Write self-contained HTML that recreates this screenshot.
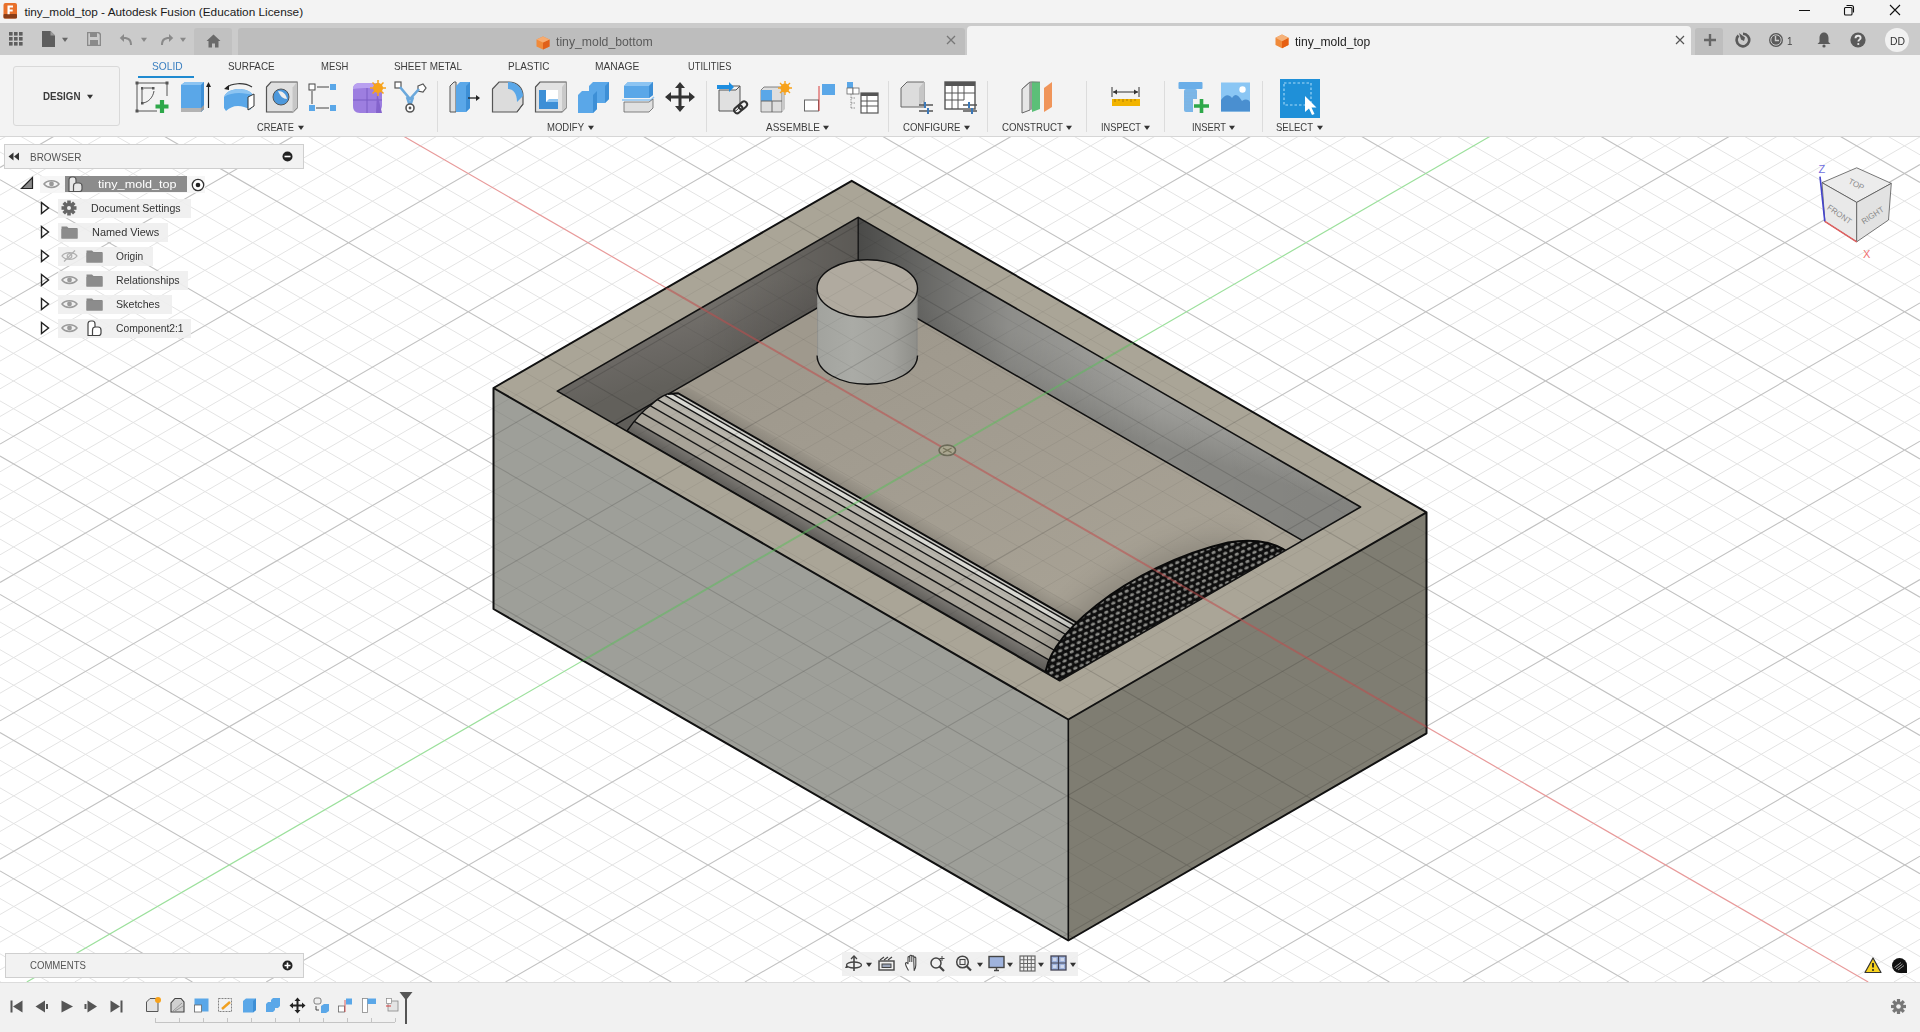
<!DOCTYPE html>
<html><head><meta charset="utf-8"><title>tiny_mold_top - Autodesk Fusion</title>
<style>html,body{margin:0;padding:0;}body{width:1920px;height:1032px;overflow:hidden;position:relative;background:#fff;font-family:"Liberation Sans",sans-serif;}</style>
</head><body>
<svg width="1920" height="1032" style="position:absolute;left:0;top:0">
<rect x="0" y="136" width="1920" height="846" fill="#ffffff"/>
<path d="M1887.4 136.0L1920.0 154.8M6.6 136.0L0.0 139.8M1791.7 136.0L1920.0 210.1M102.3 136.0L-0.0 195.1M1743.8 136.0L1920.0 237.7M150.2 136.0L0.0 222.8M1695.9 136.0L1920.0 265.4M198.1 136.0L0.0 250.5M1648.1 136.0L1920.0 293.0M245.9 136.0L0.0 278.1M1552.3 136.0L1920.0 348.3M341.7 136.0L0.0 333.5M1504.4 136.0L1920.0 376.0M389.6 136.0L0.0 361.1M1456.5 136.0L1920.0 403.6M437.4 136.0L0.0 388.8M1408.7 136.0L1920.0 431.3M485.3 136.0L0.0 416.5M1312.9 136.0L1920.0 486.6M581.1 136.0L0.0 471.8M1265.0 136.0L1920.0 514.2M628.9 136.0L0.0 499.5M1217.1 136.0L1920.0 541.9M676.8 136.0L0.0 527.1M1169.3 136.0L1920.0 569.5M724.7 136.0L0.0 554.8M1073.5 136.0L1920.0 624.8M820.4 136.0L0.0 610.1M1025.6 136.0L1920.0 652.5M868.3 136.0L0.0 637.8M977.7 136.0L1920.0 680.1M916.2 136.0L0.0 665.5M929.9 136.0L1920.0 707.8M964.0 136.0L0.0 693.2M834.1 136.0L1920.0 763.1M1059.8 136.0L0.0 748.5M786.2 136.0L1920.0 790.7M1107.7 136.0L0.0 776.2M738.3 136.0L1920.0 818.4M1155.5 136.0L0.0 803.8M690.5 136.0L1920.0 846.0M1203.4 136.0L0.0 831.5M594.7 136.0L1920.0 901.3M1299.1 136.0L0.0 886.8M546.8 136.0L1920.0 929.0M1347.0 136.0L0.0 914.5M498.9 136.0L1920.0 956.6M1394.9 136.0L0.0 942.2M451.1 136.0L1916.1 982.0M1442.8 136.0L0.0 969.8M355.3 136.0L1820.3 982.0M1538.5 136.0L74.7 982.0M307.4 136.0L1772.4 982.0M1586.4 136.0L122.5 982.0M259.5 136.0L1724.6 982.0M1634.3 136.0L170.4 982.0M211.7 136.0L1676.7 982.0M1682.1 136.0L218.3 982.0M115.9 136.0L1580.9 982.0M1777.9 136.0L314.0 982.0M68.0 136.0L1533.0 982.0M1825.7 136.0L361.9 982.0M20.1 136.0L1485.2 982.0M1873.6 136.0L409.8 982.0M0.0 152.0L1437.3 982.0M1920.0 136.9L457.7 982.0M0.0 207.3L1341.5 982.0M1920.0 192.2L553.4 982.0M0.0 235.0L1293.7 982.0M1920.0 219.9L601.3 982.0M0.0 262.6L1245.8 982.0M1920.0 247.5L649.1 982.0M0.0 290.3L1197.9 982.0M1920.0 275.2L697.0 982.0M0.0 345.6L1102.1 982.0M1920.0 330.5L792.8 982.0M0.0 373.2L1054.3 982.0M1920.0 358.2L840.6 982.0M0.0 400.9L1006.4 982.0M1920.0 385.9L888.5 982.0M0.0 428.5L958.5 982.0M1920.0 413.5L936.4 982.0M0.0 483.8L862.7 982.0M1920.0 468.9L1032.1 982.0M0.0 511.4L814.9 982.0M1920.0 496.5L1080.0 982.0M0.0 539.1L767.0 982.0M1920.0 524.2L1127.9 982.0M0.0 566.7L719.1 982.0M1920.0 551.9L1175.7 982.0M0.0 622.0L623.3 982.0M1920.0 607.2L1271.5 982.0M0.0 649.7L575.5 982.0M1920.0 634.9L1319.4 982.0M0.0 677.3L527.6 982.0M1920.0 662.5L1367.2 982.0M0.0 705.0L479.7 982.0M1920.0 690.2L1415.1 982.0M0.0 760.3L383.9 982.0M1920.0 745.5L1510.9 982.0M0.0 787.9L336.1 982.0M1920.0 773.2L1558.7 982.0M0.0 815.6L288.2 982.0M1920.0 800.9L1606.6 982.0M0.0 843.2L240.3 982.0M1920.0 828.5L1654.5 982.0M0.0 898.5L144.5 982.0M1920.0 883.9L1750.2 982.0M0.0 926.2L96.7 982.0M1920.0 911.5L1798.1 982.0M0.0 953.8L48.8 982.0M1920.0 939.2L1846.0 982.0M0.0 981.5L0.9 982.0M1920.0 966.9L1893.8 982.0" stroke="#e4e4e4" stroke-width="1" fill="none"/>
<path d="M1839.6 136.0L1920.0 182.4M54.5 136.0L0.0 167.5M1600.2 136.0L1920.0 320.7M293.8 136.0L0.0 305.8M1360.8 136.0L1920.0 458.9M533.2 136.0L0.0 444.1M1121.4 136.0L1920.0 597.2M772.5 136.0L0.0 582.5M882.0 136.0L1920.0 735.4M1011.9 136.0L0.0 720.8M642.6 136.0L1920.0 873.7M1251.3 136.0L0.0 859.2M163.8 136.0L1628.8 982.0M1730.0 136.0L266.2 982.0M0.0 179.7L1389.4 982.0M1920.0 164.5L505.5 982.0M0.0 317.9L1150.0 982.0M1920.0 302.9L744.9 982.0M0.0 456.1L910.6 982.0M1920.0 441.2L984.3 982.0M0.0 594.4L671.2 982.0M1920.0 579.5L1223.6 982.0M0.0 732.6L431.8 982.0M1920.0 717.9L1463.0 982.0M0.0 870.9L192.4 982.0M1920.0 856.2L1702.3 982.0" stroke="#c2c2c2" stroke-width="1.1" fill="none"/>
<line x1="403.2" y1="136.0" x2="1868.2" y2="982.0" stroke="#e89a9a" stroke-width="1.2"/>
<line x1="1490.6" y1="136.0" x2="26.8" y2="982.0" stroke="#9ce09c" stroke-width="1.2"/>
<defs>
<clipPath id="cav"><polygon points="858.2,217.4 557.3,391.1 1059.7,680.7 1360.6,507.0"/></clipPath>
<linearGradient id="gFloor" gradientUnits="userSpaceOnUse" x1="900" y1="330" x2="1000" y2="620"><stop offset="0" stop-color="#9f998d"/><stop offset="0.4" stop-color="#a29c90"/><stop offset="1" stop-color="#a7a194"/></linearGradient>
<linearGradient id="gWallL" gradientUnits="userSpaceOnUse" x1="700" y1="300" x2="720" y2="370"><stop offset="0" stop-color="#75726d"/><stop offset="0.5" stop-color="#6b6864"/><stop offset="1" stop-color="#62605b"/></linearGradient><linearGradient id="gWallLs" gradientUnits="userSpaceOnUse" x1="858" y1="0" x2="700" y2="0"><stop offset="0" stop-color="#000" stop-opacity="0.22"/><stop offset="1" stop-color="#000" stop-opacity="0"/></linearGradient>
<linearGradient id="gWallR" gradientUnits="userSpaceOnUse" x1="1110" y1="360" x2="1090" y2="425"><stop offset="0" stop-color="#a4a4a0"/><stop offset="0.5" stop-color="#9a9a96"/><stop offset="1" stop-color="#878783"/></linearGradient><linearGradient id="gWallRs" gradientUnits="userSpaceOnUse" x1="858" y1="0" x2="1360" y2="0"><stop offset="0" stop-color="#000" stop-opacity="0.55"/><stop offset="0.3" stop-color="#000" stop-opacity="0.14"/><stop offset="0.6" stop-color="#000" stop-opacity="0"/><stop offset="1" stop-color="#000" stop-opacity="0.03"/></linearGradient>
<linearGradient id="gGrvD" gradientUnits="userSpaceOnUse" x1="850" y1="545.5" x2="844.05" y2="555.8"><stop offset="0" stop-color="#7a7772"/><stop offset="1" stop-color="#605e5a"/></linearGradient><linearGradient id="gGrvS" gradientUnits="userSpaceOnUse" x1="857.98" y1="478.3" x2="850" y2="492.2"><stop offset="0" stop-color="#000" stop-opacity="0"/><stop offset="1" stop-color="#000" stop-opacity="0.13"/></linearGradient><linearGradient id="gPin" gradientUnits="userSpaceOnUse" x1="817" y1="0" x2="917" y2="0"><stop offset="0" stop-color="#a2a39e"/><stop offset="0.35" stop-color="#aaaba6"/><stop offset="0.75" stop-color="#a2a29d"/><stop offset="1" stop-color="#8e8e89"/></linearGradient>
<pattern id="mesh" patternUnits="userSpaceOnUse" width="6.8" height="11" patternTransform="rotate(-24)"><rect width="6.8" height="11" fill="#0e0e0e"/><ellipse cx="3.4" cy="2.75" rx="2.3" ry="1.5" fill="#8c8c88"/><ellipse cx="0" cy="8.25" rx="2.3" ry="1.5" fill="#8c8c88"/><ellipse cx="6.8" cy="8.25" rx="2.3" ry="1.5" fill="#8c8c88"/></pattern>
<filter id="blur12" x="-50%" y="-50%" width="200%" height="200%"><feGaussianBlur stdDeviation="14"/></filter>
</defs>
<polygon points="493.5,388.0 1068.3,719.5 1068.3,940.5 493.5,609.0" fill="#9e9f99"/>
<polygon points="1068.3,719.5 1426.5,512.3 1426.5,733.3 1068.3,940.5" fill="#7f7d72"/>
<path d="M851.7 180.8L493.5 388.0L1068.3 719.5L1426.5 512.3ZM858.2 217.4L557.3 391.1L1059.7 680.7L1360.6 507.0Z" fill="#aaa597" fill-rule="evenodd"/>
<g clip-path="url(#cav)">
<polygon points="858.2,217.4 557.3,391.1 1059.7,680.7 1360.6,507.0" fill="url(#gFloor)"/>
<polygon points="858.2,217.4 557.3,391.1 557.3,458.1 858.2,284.4" fill="url(#gWallL)"/>
<polygon points="858.2,217.4 557.3,391.1 557.3,458.1 858.2,284.4" fill="url(#gWallLs)"/>
<polygon points="858.2,217.4 1360.6,507.0 1360.6,574.0 858.2,284.4" fill="url(#gWallR)"/>
<polygon points="858.2,217.4 1360.6,507.0 1360.6,574.0 858.2,284.4" fill="url(#gWallRs)"/>
<polygon points="600,433 668,393.9 627,431 620,441" fill="#5f5d59"/>
<line x1="858.2" y1="217.4" x2="858.2" y2="284.4" stroke="#111" stroke-width="1.3"/>
<polyline points="557.3,458.1 858.2,284.4 1360.6,574.0" fill="none" stroke="#111" stroke-width="1.5"/>
<polygon points="667.5,394.5 687.9,386.9 1100.0,620.1 1100.0,637.1" fill="url(#gGrvS)"/>
<clipPath id="grv"><path d="M667.5,394 L678,393.2 L1080,624.6 L1080,760 L560,760 L600,470 L627,431 C634,421 641,412 651,405 C656,400 662,396 667.5,394Z"/></clipPath>
<g clip-path="url(#grv)">
<polygon points="560.0,325.3 1090.0,630.3 1090.0,634.1 560.0,329.1" fill="#c9c8c2"/>
<polygon points="560.0,329.1 1090.0,634.1 1090.0,640.0 560.0,335.0" fill="#d9d9d3"/>
<polygon points="560.0,335.0 1090.0,640.0 1090.0,648.5 560.0,343.5" fill="#b8b5ac"/>
<polygon points="560.0,343.5 1090.0,648.5 1090.0,658.8 560.0,353.8" fill="#b1ada3"/>
<polygon points="560.0,353.8 1090.0,658.8 1090.0,670.8 560.0,365.8" fill="#aca79c"/>
<polygon points="560.0,365.8 1090.0,670.8 1090.0,683.6 560.0,378.6" fill="#a8a398"/>
<polygon points="560.0,378.6 1090.0,683.6 1090.0,697.3 560.0,392.3" fill="url(#gGrvD)"/>
<polygon points="560.0,392.3 1090.0,697.3 1090.0,720.3 560.0,415.3" fill="#6a6661"/>
<line x1="560.0" y1="329.1" x2="1090.0" y2="634.1" stroke="#151515" stroke-width="1.4"/>
<line x1="560.0" y1="335.0" x2="1090.0" y2="640.0" stroke="#151515" stroke-width="1.4"/>
<line x1="560.0" y1="343.5" x2="1090.0" y2="648.5" stroke="#151515" stroke-width="1.4"/>
<line x1="560.0" y1="353.8" x2="1090.0" y2="658.8" stroke="#151515" stroke-width="1.4"/>
<line x1="560.0" y1="365.8" x2="1090.0" y2="670.8" stroke="#151515" stroke-width="1.4"/>
<line x1="560.0" y1="378.6" x2="1090.0" y2="683.6" stroke="#151515" stroke-width="1.4"/>
<line x1="560.0" y1="392.3" x2="1090.0" y2="697.3" stroke="#151515" stroke-width="1.4"/>
</g>
<path d="M667.5,394 L678,393.2 L1080,624.6" stroke="#0d0d0d" stroke-width="2" fill="none"/>
<path d="M627,431 C634,421 641,412 651,405 C656,400 662,396 667.5,394" stroke="#111" stroke-width="1.5" fill="none"/>
<ellipse cx="1150" cy="610" rx="120" ry="45" transform="rotate(-30 1150 610)" fill="#000" opacity="0.16" filter="url(#blur12)"/>
<path d="M1046,684 C1036,640 1130,565 1228,542.5 C1260,537 1281,545 1292,556 L1120,700Z" fill="url(#mesh)"/>
<path d="M1046,684 C1036,640 1130,565 1228,542.5 C1260,537 1281,545 1292,556" stroke="#0a0a0a" stroke-width="2" fill="none"/>
<path d="M817.1 288.5 L817.1 355.4 A50.2 28.8 0 0 0 917.5 355.4 L917.5 288.5 Z" fill="url(#gPin)"/>
<path d="M817.1 355.4 A50.2 28.8 0 0 0 917.5 355.4" fill="none" stroke="#111" stroke-width="1.4"/>
<path d="M817.6 288.5V355.4M917.0 288.5V355.4" stroke="#777" stroke-width="0.8" stroke-opacity="0.5"/>
<ellipse cx="867.3" cy="288.5" rx="50.2" ry="28.8" fill="#b0aa9f" stroke="#111" stroke-width="1.4"/>
</g>
<polygon points="858.2,217.4 557.3,391.1 1059.7,680.7 1360.6,507.0" fill="none" stroke="#111" stroke-width="1.6" stroke-linejoin="round"/>
<path d="M851.7 180.8L1426.5 512.3L1426.5 733.3L1068.3 940.5L493.5 609.0L493.5 388.0ZM493.5 388.0L1068.3 719.5L1426.5 512.3" fill="none" stroke="#111" stroke-width="2" stroke-linejoin="round"/>
<line x1="1068.3" y1="719.5" x2="1068.3" y2="940.5" stroke="#111" stroke-width="1.6"/>
<clipPath id="mclip"><polygon points="851.7,180.8 1426.5,512.3 1426.5,733.3 1068.3,940.5 493.5,609.0 493.5,388.0"/></clipPath>
<g clip-path="url(#mclip)">
<path d="M1887.4 136.0L1920.0 154.8M6.6 136.0L0.0 139.8M1791.7 136.0L1920.0 210.1M102.3 136.0L-0.0 195.1M1743.8 136.0L1920.0 237.7M150.2 136.0L0.0 222.8M1695.9 136.0L1920.0 265.4M198.1 136.0L0.0 250.5M1648.1 136.0L1920.0 293.0M245.9 136.0L0.0 278.1M1552.3 136.0L1920.0 348.3M341.7 136.0L0.0 333.5M1504.4 136.0L1920.0 376.0M389.6 136.0L0.0 361.1M1456.5 136.0L1920.0 403.6M437.4 136.0L0.0 388.8M1408.7 136.0L1920.0 431.3M485.3 136.0L0.0 416.5M1312.9 136.0L1920.0 486.6M581.1 136.0L0.0 471.8M1265.0 136.0L1920.0 514.2M628.9 136.0L0.0 499.5M1217.1 136.0L1920.0 541.9M676.8 136.0L0.0 527.1M1169.3 136.0L1920.0 569.5M724.7 136.0L0.0 554.8M1073.5 136.0L1920.0 624.8M820.4 136.0L0.0 610.1M1025.6 136.0L1920.0 652.5M868.3 136.0L0.0 637.8M977.7 136.0L1920.0 680.1M916.2 136.0L0.0 665.5M929.9 136.0L1920.0 707.8M964.0 136.0L0.0 693.2M834.1 136.0L1920.0 763.1M1059.8 136.0L0.0 748.5M786.2 136.0L1920.0 790.7M1107.7 136.0L0.0 776.2M738.3 136.0L1920.0 818.4M1155.5 136.0L0.0 803.8M690.5 136.0L1920.0 846.0M1203.4 136.0L0.0 831.5M594.7 136.0L1920.0 901.3M1299.1 136.0L0.0 886.8M546.8 136.0L1920.0 929.0M1347.0 136.0L0.0 914.5M498.9 136.0L1920.0 956.6M1394.9 136.0L0.0 942.2M451.1 136.0L1916.1 982.0M1442.8 136.0L0.0 969.8M355.3 136.0L1820.3 982.0M1538.5 136.0L74.7 982.0M307.4 136.0L1772.4 982.0M1586.4 136.0L122.5 982.0M259.5 136.0L1724.6 982.0M1634.3 136.0L170.4 982.0M211.7 136.0L1676.7 982.0M1682.1 136.0L218.3 982.0M115.9 136.0L1580.9 982.0M1777.9 136.0L314.0 982.0M68.0 136.0L1533.0 982.0M1825.7 136.0L361.9 982.0M20.1 136.0L1485.2 982.0M1873.6 136.0L409.8 982.0M0.0 152.0L1437.3 982.0M1920.0 136.9L457.7 982.0M0.0 207.3L1341.5 982.0M1920.0 192.2L553.4 982.0M0.0 235.0L1293.7 982.0M1920.0 219.9L601.3 982.0M0.0 262.6L1245.8 982.0M1920.0 247.5L649.1 982.0M0.0 290.3L1197.9 982.0M1920.0 275.2L697.0 982.0M0.0 345.6L1102.1 982.0M1920.0 330.5L792.8 982.0M0.0 373.2L1054.3 982.0M1920.0 358.2L840.6 982.0M0.0 400.9L1006.4 982.0M1920.0 385.9L888.5 982.0M0.0 428.5L958.5 982.0M1920.0 413.5L936.4 982.0M0.0 483.8L862.7 982.0M1920.0 468.9L1032.1 982.0M0.0 511.4L814.9 982.0M1920.0 496.5L1080.0 982.0M0.0 539.1L767.0 982.0M1920.0 524.2L1127.9 982.0M0.0 566.7L719.1 982.0M1920.0 551.9L1175.7 982.0M0.0 622.0L623.3 982.0M1920.0 607.2L1271.5 982.0M0.0 649.7L575.5 982.0M1920.0 634.9L1319.4 982.0M0.0 677.3L527.6 982.0M1920.0 662.5L1367.2 982.0M0.0 705.0L479.7 982.0M1920.0 690.2L1415.1 982.0M0.0 760.3L383.9 982.0M1920.0 745.5L1510.9 982.0M0.0 787.9L336.1 982.0M1920.0 773.2L1558.7 982.0M0.0 815.6L288.2 982.0M1920.0 800.9L1606.6 982.0M0.0 843.2L240.3 982.0M1920.0 828.5L1654.5 982.0M0.0 898.5L144.5 982.0M1920.0 883.9L1750.2 982.0M0.0 926.2L96.7 982.0M1920.0 911.5L1798.1 982.0M0.0 953.8L48.8 982.0M1920.0 939.2L1846.0 982.0M0.0 981.5L0.9 982.0M1920.0 966.9L1893.8 982.0" stroke="#000" stroke-opacity="0.055" stroke-width="1" fill="none"/>
<path d="M1839.6 136.0L1920.0 182.4M54.5 136.0L0.0 167.5M1600.2 136.0L1920.0 320.7M293.8 136.0L0.0 305.8M1360.8 136.0L1920.0 458.9M533.2 136.0L0.0 444.1M1121.4 136.0L1920.0 597.2M772.5 136.0L0.0 582.5M882.0 136.0L1920.0 735.4M1011.9 136.0L0.0 720.8M642.6 136.0L1920.0 873.7M1251.3 136.0L0.0 859.2M163.8 136.0L1628.8 982.0M1730.0 136.0L266.2 982.0M0.0 179.7L1389.4 982.0M1920.0 164.5L505.5 982.0M0.0 317.9L1150.0 982.0M1920.0 302.9L744.9 982.0M0.0 456.1L910.6 982.0M1920.0 441.2L984.3 982.0M0.0 594.4L671.2 982.0M1920.0 579.5L1223.6 982.0M0.0 732.6L431.8 982.0M1920.0 717.9L1463.0 982.0M0.0 870.9L192.4 982.0M1920.0 856.2L1702.3 982.0" stroke="#000" stroke-opacity="0.14" stroke-width="1.1" fill="none"/>
<line x1="403.2" y1="136.0" x2="1868.2" y2="982.0" stroke="#c04c4c" stroke-opacity="0.55" stroke-width="2"/>
<line x1="1490.6" y1="136.0" x2="26.8" y2="982.0" stroke="#58c058" stroke-opacity="0.5" stroke-width="2"/>
</g>
<ellipse cx="947.3" cy="450.3" rx="8.3" ry="5.2" fill="#aaa690" stroke="#6b6a58" stroke-width="1.6"/>
<path d="M943 448l8.6 4.6M943 452.6l8.6-4.6" stroke="#77745c" stroke-width="1.3"/>
</svg>
<div style="position:absolute;left:0.0px;top:0.0px;width:1920.0px;height:23.0px;background:#f3f3f3"></div>
<svg style="position:absolute;left:3.0px;top:3.0px;" width="15" height="16" viewBox="0 0 15 16"><rect x="0.5" y="0" width="13.5" height="15.5" rx="2" fill="#e8702a"/><rect x="0.5" y="11" width="13.5" height="4.5" rx="1" fill="#8a3d17"/><path d="M4.5 2.5h5.5v2h-3.3v2h3v2h-3v2.8h-2.2z" fill="#fff"/></svg>
<span style="position:absolute;left:24.4px;top:4.9px;font-size:11.80px;line-height:normal;color:#1a1a1a;white-space:nowrap;">tiny_mold_top - Autodesk Fusion (Education License)</span>
<div style="position:absolute;left:1799.0px;top:10.0px;width:10.5px;height:1.2px;background:#111"></div>
<svg style="position:absolute;left:1843.0px;top:4.0px;" width="12" height="12" viewBox="0 0 12 12"><rect x="1.5" y="3.5" width="7.5" height="7.5" rx="1" fill="none" stroke="#111" stroke-width="1.1"/><path d="M3.5 1.5h5a2 2 0 0 1 2 2v5" fill="none" stroke="#111" stroke-width="1.1"/></svg>
<svg style="position:absolute;left:1889.0px;top:4.0px;" width="12" height="12" viewBox="0 0 12 12"><path d="M1 1L11 11M11 1L1 11" stroke="#111" stroke-width="1.1"/></svg>
<div style="position:absolute;left:0.0px;top:23.0px;width:1920.0px;height:32.0px;background:#cbcbcb"></div>
<svg style="position:absolute;left:9.0px;top:32.0px;" width="14" height="14" viewBox="0 0 14 14"><rect x="0" y="0" width="3.6" height="3.6" fill="#5e5e5e"/><rect x="0" y="5" width="3.6" height="3.6" fill="#5e5e5e"/><rect x="0" y="10" width="3.6" height="3.6" fill="#5e5e5e"/><rect x="5" y="0" width="3.6" height="3.6" fill="#5e5e5e"/><rect x="5" y="5" width="3.6" height="3.6" fill="#5e5e5e"/><rect x="5" y="10" width="3.6" height="3.6" fill="#5e5e5e"/><rect x="10" y="0" width="3.6" height="3.6" fill="#5e5e5e"/><rect x="10" y="5" width="3.6" height="3.6" fill="#5e5e5e"/><rect x="10" y="10" width="3.6" height="3.6" fill="#5e5e5e"/></svg>
<svg style="position:absolute;left:41.0px;top:31.0px;" width="16" height="17" viewBox="0 0 16 17"><path d="M1 0h8.5l4.5 4.5V16H1z" fill="#5e5e5e"/><path d="M9.5 0v4.5H14" fill="#9a9a9a"/></svg>
<svg style="position:absolute;left:61.5px;top:35.5px;" width="6" height="6" viewBox="0 0 6 6"><path d="M0 1.8L6 1.8L3 6 Z" fill="#666"/></svg>
<svg style="position:absolute;left:87.0px;top:32.0px;" width="14" height="14" viewBox="0 0 14 14"><path d="M0.5 0.5h11l2 2v11h-13z" fill="none" stroke="#8a8a8a" stroke-width="1.6"/><rect x="3" y="1" width="7" height="4" fill="#8a8a8a"/><rect x="3" y="8" width="8" height="5" fill="#8a8a8a"/></svg>
<svg style="position:absolute;left:119.0px;top:32.0px;" width="16" height="14" viewBox="0 0 16 14"><path d="M13 13 C13 7 10 5 5 5 L5 2 L0.8 6 L5 10 L5 7 C9 7 11 9 11 13Z" fill="#8a8a8a"/></svg>
<svg style="position:absolute;left:140.5px;top:35.5px;" width="6" height="6" viewBox="0 0 6 6"><path d="M0 1.8L6 1.8L3 6 Z" fill="#888"/></svg>
<svg style="position:absolute;left:158.0px;top:32.0px;" width="16" height="14" viewBox="0 0 16 14"><path d="M3 13 C3 7 6 5 11 5 L11 2 L15.2 6 L11 10 L11 7 C7 7 5 9 5 13Z" fill="#8a8a8a"/></svg>
<svg style="position:absolute;left:179.5px;top:35.5px;" width="6" height="6" viewBox="0 0 6 6"><path d="M0 1.8L6 1.8L3 6 Z" fill="#888"/></svg>
<div style="position:absolute;left:193.5px;top:27.5px;width:38.5px;height:27.0px;background:#c1c1c1;border-radius:3px 3px 0 0"></div>
<svg style="position:absolute;left:206.0px;top:34.0px;" width="15" height="14" viewBox="0 0 15 14"><path d="M7.5 0.5L0.5 7H2.5V13.5H6V9.5H9V13.5H12.5V7H14.5Z" fill="#6a6a6a"/></svg>
<div style="position:absolute;left:238.0px;top:27.5px;width:727.0px;height:27.5px;background:#bdbdbd;border-radius:3px 3px 0 0"></div>
<svg style="position:absolute;left:535.5px;top:35.5px;" width="15" height="14" viewBox="0 0 15 14"><path d="M7 0.5L13.5 3.5V10.5L7 13.5L0.5 10.5V3.5Z" fill="#f08a3a"/><path d="M7 6.5L13.5 3.5V10.5L7 13.5Z" fill="#e0601a"/><path d="M0.5 3.5L7 0.5L13.5 3.5L7 6.5Z" fill="#f7ab70"/></svg>
<span style="position:absolute;left:555.8px;top:34.7px;font-size:11.90px;line-height:normal;color:#5a5a5a;white-space:nowrap;transform:scaleX(1.030);transform-origin:0 0;">tiny_mold_bottom</span>
<svg style="position:absolute;left:946.0px;top:35.0px;" width="10" height="10" viewBox="0 0 10 10"><path d="M1 1L9 9M9 1L1 9" stroke="#777" stroke-width="1.3"/></svg>
<div style="position:absolute;left:967.0px;top:26.0px;width:724.0px;height:29.0px;background:#f3f3f3;border-radius:4px 4px 0 0"></div>
<svg style="position:absolute;left:1274.5px;top:34.0px;" width="15" height="15" viewBox="0 0 15 15"><path d="M7 0.5L13.5 3.8V11L7 14.3L0.5 11V3.8Z" fill="#f08a3a"/><path d="M7 7.3L13.5 3.8V11L7 14.3Z" fill="#e65f12"/><path d="M0.5 3.8L7 0.5L13.5 3.8L7 7.3Z" fill="#f5b27a"/></svg>
<span style="position:absolute;left:1294.7px;top:34.7px;font-size:11.90px;line-height:normal;color:#1e1e1e;white-space:nowrap;transform:scaleX(1.016);transform-origin:0 0;">tiny_mold_top</span>
<svg style="position:absolute;left:1675.0px;top:35.0px;" width="10" height="10" viewBox="0 0 10 10"><path d="M1 1L9 9M9 1L1 9" stroke="#555" stroke-width="1.2"/></svg>
<div style="position:absolute;left:1695.0px;top:27.5px;width:28.0px;height:27.5px;background:#bebebe;border-radius:3px 3px 0 0"></div>
<svg style="position:absolute;left:1702.5px;top:33.0px;" width="14" height="14" viewBox="0 0 14 14"><path d="M7 1V13M1 7H13" stroke="#666" stroke-width="2.4"/></svg>
<svg style="position:absolute;left:1735.0px;top:32.0px;" width="16" height="16" viewBox="0 0 16 16"><path d="M3.5 3.5A6.3 6.3 0 1 0 8 1.7" fill="none" stroke="#5a5a5a" stroke-width="2.6"/><path d="M4 1L10 5.5L9 9L6 7.5Z" fill="#5a5a5a"/></svg>
<svg style="position:absolute;left:1768.0px;top:32.0px;" width="16" height="16" viewBox="0 0 16 16"><circle cx="8" cy="8" r="7" fill="#5a5a5a"/><circle cx="8" cy="8" r="5.2" fill="none" stroke="#cbcbcb" stroke-width="1"/><path d="M7.5 4v4.5h3.5" fill="none" stroke="#cbcbcb" stroke-width="1.4"/></svg>
<span style="position:absolute;left:1786.5px;top:35.0px;font-size:11.00px;line-height:normal;color:#444;white-space:nowrap;transform:scaleX(0.899);transform-origin:0 0;">1</span>
<svg style="position:absolute;left:1816.0px;top:31.0px;" width="16" height="17" viewBox="0 0 16 17"><path d="M8 1.5c-3 0-4.5 2.5-4.5 5.5v4L1.5 13h13l-2-2V7c0-3-1.5-5.5-4.5-5.5z" fill="#5a5a5a"/><circle cx="8" cy="15" r="1.6" fill="#5a5a5a"/></svg>
<svg style="position:absolute;left:1850.0px;top:32.0px;" width="16" height="16" viewBox="0 0 16 16"><circle cx="8" cy="8" r="7.6" fill="#5a5a5a"/><path d="M5.5 6.2c0-1.6 1.1-2.5 2.6-2.5s2.5 0.9 2.5 2.2c0 1.6-2.2 1.9-2.2 3.5" fill="none" stroke="#e6e6e6" stroke-width="1.9"/><circle cx="8.3" cy="12" r="1.1" fill="#e6e6e6"/></svg>
<div style="position:absolute;left:1885.0px;top:28.0px;width:24.0px;height:24.0px;background:#f1f1f1;border-radius:50%"></div>
<span style="position:absolute;left:1889.5px;top:35.0px;font-size:11.00px;line-height:normal;color:#333;white-space:nowrap;transform:scaleX(0.944);transform-origin:0 0;">DD</span>
<div style="position:absolute;left:0.0px;top:55.0px;width:1920.0px;height:81.0px;background:#f3f3f3"></div>
<div style="position:absolute;left:0.0px;top:135.5px;width:1920.0px;height:1.0px;background:#d6d6d6"></div>
<div style="position:absolute;left:12.5px;top:65.8px;width:107.5px;height:60.0px;border:1px solid #d9d9d9;border-radius:3px;box-sizing:border-box;background:#f2f2f2"></div>
<span style="position:absolute;left:43.3px;top:90.5px;font-size:10.00px;line-height:normal;color:#3a3a3a;white-space:nowrap;font-weight:bold;transform:scaleX(0.978);transform-origin:0 0;">DESIGN</span>
<svg style="position:absolute;left:87.0px;top:93.0px;" width="6" height="6" viewBox="0 0 6 6"><path d="M0 1.8L6 1.8L3 6 Z" fill="#333"/></svg>
<span style="position:absolute;left:151.6px;top:59.8px;font-size:11.00px;line-height:normal;color:#3a7fc0;white-space:nowrap;transform:scaleX(0.927);transform-origin:0 0;">SOLID</span>
<span style="position:absolute;left:228.0px;top:59.8px;font-size:11.00px;line-height:normal;color:#3c3c3c;white-space:nowrap;transform:scaleX(0.899);transform-origin:0 0;">SURFACE</span>
<span style="position:absolute;left:321.3px;top:59.8px;font-size:11.00px;line-height:normal;color:#3c3c3c;white-space:nowrap;transform:scaleX(0.862);transform-origin:0 0;">MESH</span>
<span style="position:absolute;left:394.0px;top:59.8px;font-size:11.00px;line-height:normal;color:#3c3c3c;white-space:nowrap;transform:scaleX(0.902);transform-origin:0 0;">SHEET METAL</span>
<span style="position:absolute;left:507.5px;top:59.8px;font-size:11.00px;line-height:normal;color:#3c3c3c;white-space:nowrap;transform:scaleX(0.905);transform-origin:0 0;">PLASTIC</span>
<span style="position:absolute;left:595.3px;top:59.8px;font-size:11.00px;line-height:normal;color:#3c3c3c;white-space:nowrap;transform:scaleX(0.931);transform-origin:0 0;">MANAGE</span>
<span style="position:absolute;left:688.3px;top:59.8px;font-size:11.00px;line-height:normal;color:#3c3c3c;white-space:nowrap;transform:scaleX(0.845);transform-origin:0 0;">UTILITIES</span>
<div style="position:absolute;left:138.3px;top:75.8px;width:56.0px;height:2.6px;background:#1f8ad0"></div>
<span style="position:absolute;left:256.7px;top:121.0px;font-size:10.80px;line-height:normal;color:#3c3c3c;white-space:nowrap;transform:scaleX(0.860);transform-origin:0 0;">CREATE</span>
<svg style="position:absolute;left:297.8px;top:123.5px;" width="6" height="6" viewBox="0 0 6 6"><path d="M0 1.8L6 1.8L3 6 Z" fill="#333"/></svg>
<span style="position:absolute;left:546.7px;top:121.0px;font-size:10.80px;line-height:normal;color:#3c3c3c;white-space:nowrap;transform:scaleX(0.881);transform-origin:0 0;">MODIFY</span>
<svg style="position:absolute;left:587.8px;top:123.5px;" width="6" height="6" viewBox="0 0 6 6"><path d="M0 1.8L6 1.8L3 6 Z" fill="#333"/></svg>
<span style="position:absolute;left:765.8px;top:121.0px;font-size:10.80px;line-height:normal;color:#3c3c3c;white-space:nowrap;transform:scaleX(0.926);transform-origin:0 0;">ASSEMBLE</span>
<svg style="position:absolute;left:822.8px;top:123.5px;" width="6" height="6" viewBox="0 0 6 6"><path d="M0 1.8L6 1.8L3 6 Z" fill="#333"/></svg>
<span style="position:absolute;left:903.3px;top:121.0px;font-size:10.80px;line-height:normal;color:#3c3c3c;white-space:nowrap;transform:scaleX(0.887);transform-origin:0 0;">CONFIGURE</span>
<svg style="position:absolute;left:963.7px;top:123.5px;" width="6" height="6" viewBox="0 0 6 6"><path d="M0 1.8L6 1.8L3 6 Z" fill="#333"/></svg>
<span style="position:absolute;left:1001.7px;top:121.0px;font-size:10.80px;line-height:normal;color:#3c3c3c;white-space:nowrap;transform:scaleX(0.897);transform-origin:0 0;">CONSTRUCT</span>
<svg style="position:absolute;left:1065.8px;top:123.5px;" width="6" height="6" viewBox="0 0 6 6"><path d="M0 1.8L6 1.8L3 6 Z" fill="#333"/></svg>
<span style="position:absolute;left:1100.8px;top:121.0px;font-size:10.80px;line-height:normal;color:#3c3c3c;white-space:nowrap;transform:scaleX(0.855);transform-origin:0 0;">INSPECT</span>
<svg style="position:absolute;left:1143.7px;top:123.5px;" width="6" height="6" viewBox="0 0 6 6"><path d="M0 1.8L6 1.8L3 6 Z" fill="#333"/></svg>
<span style="position:absolute;left:1191.7px;top:121.0px;font-size:10.80px;line-height:normal;color:#3c3c3c;white-space:nowrap;transform:scaleX(0.865);transform-origin:0 0;">INSERT</span>
<svg style="position:absolute;left:1228.7px;top:123.5px;" width="6" height="6" viewBox="0 0 6 6"><path d="M0 1.8L6 1.8L3 6 Z" fill="#333"/></svg>
<span style="position:absolute;left:1276.3px;top:121.0px;font-size:10.80px;line-height:normal;color:#3c3c3c;white-space:nowrap;transform:scaleX(0.881);transform-origin:0 0;">SELECT</span>
<svg style="position:absolute;left:1317.0px;top:123.5px;" width="6" height="6" viewBox="0 0 6 6"><path d="M0 1.8L6 1.8L3 6 Z" fill="#333"/></svg>
<div style="position:absolute;left:437.0px;top:81.0px;width:1.0px;height:51.0px;background:#dcdcdc"></div>
<div style="position:absolute;left:705.8px;top:81.0px;width:1.0px;height:51.0px;background:#dcdcdc"></div>
<div style="position:absolute;left:888.3px;top:81.0px;width:1.0px;height:51.0px;background:#dcdcdc"></div>
<div style="position:absolute;left:987.2px;top:81.0px;width:1.0px;height:51.0px;background:#dcdcdc"></div>
<div style="position:absolute;left:1086.3px;top:81.0px;width:1.0px;height:51.0px;background:#dcdcdc"></div>
<div style="position:absolute;left:1164.2px;top:81.0px;width:1.0px;height:51.0px;background:#dcdcdc"></div>
<div style="position:absolute;left:1261.7px;top:81.0px;width:1.0px;height:51.0px;background:#dcdcdc"></div>
<svg style="position:absolute;left:135.0px;top:80.0px;" width="36" height="36" viewBox="0 0 36 36"><rect x="2" y="3" width="30" height="28" fill="none" stroke="#555" stroke-width="1" stroke-dasharray="0"/><g fill="#555"><rect x="0.5" y="1.5" width="3" height="3"/><rect x="30.5" y="1.5" width="3" height="3"/><rect x="0.5" y="29.5" width="3" height="3"/></g><path d="M7 9v13M9 8h8M8 23c6-1 10-6 11-12" fill="none" stroke="#555" stroke-width="1"/><g fill="#555"><rect x="6" y="7" width="2.5" height="2.5"/><rect x="17" y="7" width="2.5" height="2.5"/><rect x="6" y="22" width="2.5" height="2.5"/></g><rect x="22" y="16" width="12" height="16" fill="#f3f3f3"/><path d="M27 20v13M20.5 26.5h13" stroke="#2ea84a" stroke-width="4.2"/></svg>
<svg style="position:absolute;left:180.0px;top:80.0px;" width="36" height="36" viewBox="0 0 36 36"><path d="M1 5L5 2H24V29L21 32H1Z" fill="#5aa7e8"/><path d="M1 5L5 2H24L21 5Z" fill="#8cc4f2"/><path d="M21 5L24 2V29L21 32Z" fill="#3d8fd6"/><rect x="1" y="28" width="20" height="4" fill="#b3b3b3"/><path d="M21 28L24 25V29L21 32Z" fill="#9e9e9e"/><path d="M28.5 28V4" stroke="#222" stroke-width="1.2"/><path d="M26 7L28.5 2L31 7Z" fill="#222"/></svg>
<svg style="position:absolute;left:222.0px;top:80.0px;" width="36" height="36" viewBox="0 0 36 36"><path d="M2 17C4 11 12 9 17 9S29 11 31 15V26L28 30C24 27 20 26 16 26C11 26 7 28 4 31L2 28Z" fill="#5aa7e8"/><path d="M2 17C4 11 12 9 17 9S29 11 31 15C27 14 22 13 17 13S6 14 2 17Z" fill="#8cc4f2"/><path d="M26 17L32 14V26L26 30Z" fill="#fff" stroke="#333" stroke-width="1"/><path d="M4 8C9 3 22 2 30 7" fill="none" stroke="#333" stroke-width="1.2"/><path d="M2 9L7 5L7 10Z" fill="#222"/></svg>
<svg style="position:absolute;left:265.0px;top:80.0px;" width="36" height="36" viewBox="0 0 36 36"><path d="M1.5 7L6 2H32V28L28 32H1.5Z" fill="#e0e0e0" stroke="#555" stroke-width="1.2"/><path d="M28 7V32" stroke="#c8c8c8" stroke-width="1"/><path d="M28 7L32 2V28L28 32Z" fill="#c6c6c6"/><circle cx="16" cy="17" r="8" fill="#4c98dc" stroke="#555" stroke-width="1"/><path d="M13 11C15 16 18 19 22 19C21 14 18 11 13 11Z" fill="#eee"/></svg>
<svg style="position:absolute;left:307.0px;top:80.0px;" width="36" height="36" viewBox="0 0 36 36"><rect x="2" y="4" width="6" height="6" fill="#fff" stroke="#444" stroke-width="1"/><rect x="23" y="4" width="6" height="6" fill="#5aa7e8"/><rect x="2" y="25" width="6" height="6" fill="#5aa7e8"/><rect x="23" y="25" width="6" height="6" fill="#5aa7e8"/><path d="M10 7H22M5 11V24M9 28H22" stroke="#444" stroke-width="1"/></svg>
<svg style="position:absolute;left:350.0px;top:80.0px;" width="36" height="36" viewBox="0 0 36 36"><path d="M3 9C3 5 6 3 10 3H26C30 3 32 6 32 10V25C32 30 29 33 25 33H10C5 33 3 30 3 26Z" fill="#9d7ee0"/><path d="M3 9C3 5 6 3 10 3H26C30 3 32 6 32 10C28 8 22 8 18 8S8 8 3 9Z" fill="#b9a0f0"/><path d="M17 8V33M3 20H32" stroke="#7b5cc4" stroke-width="1"/><path d="M27 13L32 33L26 33Z" fill="#8463cc"/><circle cx="28" cy="8" r="5" fill="#f7a21b"/><path d="M28 0V16M20 8H36M22.5 2.5L33.5 13.5M33.5 2.5L22.5 13.5" stroke="#f7a21b" stroke-width="1.5"/></svg>
<svg style="position:absolute;left:394.0px;top:80.0px;" width="36" height="36" viewBox="0 0 36 36"><rect x="1" y="2" width="6" height="6" fill="#fff" stroke="#555" stroke-width="1.2"/><path d="M24 6l5-2 3 4-3 4-5-1z" fill="#fff" stroke="#555" stroke-width="1.2"/><path d="M6 7L16 19L25 9" fill="none" stroke="#6aa8dc" stroke-width="2.6"/><path d="M13 17L16 26L19 17" fill="none" stroke="#6aa8dc" stroke-width="2.6"/><circle cx="16" cy="28" r="4" fill="#fff" stroke="#555" stroke-width="1.6"/><circle cx="16" cy="28" r="1.4" fill="#555"/></svg>
<svg style="position:absolute;left:448.0px;top:80.0px;" width="36" height="36" viewBox="0 0 36 36"><path d="M2 6L6 2H8V32H2Z" fill="#e0e0e0" stroke="#555" stroke-width="1"/><path d="M8 6L12 2H22V28L18 32H8Z" fill="#5aa7e8"/><path d="M18 6L22 2V28L18 32Z" fill="#3d8fd6"/><path d="M20 18H30" stroke="#222" stroke-width="1.3"/><path d="M28 15L32 18L28 21Z" fill="#222"/></svg>
<svg style="position:absolute;left:491.0px;top:80.0px;" width="36" height="36" viewBox="0 0 36 36"><path d="M1.5 9L8 2H18C26 2 32 8 32 16V24L26 32H1.5Z" fill="#dcdcdc" stroke="#555" stroke-width="1.2"/><path d="M17 2C25 2 32 8 32 16L26 22C26 13 22 9 17 9Z" fill="#5aa7e8"/><path d="M26 32L32 24" stroke="#555" stroke-width="1"/></svg>
<svg style="position:absolute;left:534.0px;top:80.0px;" width="36" height="36" viewBox="0 0 36 36"><path d="M1.5 7L6 2H32V28L28 32H1.5Z" fill="#e2e2e2" stroke="#555" stroke-width="1.2"/><path d="M28 7L32 2V28L28 32Z" fill="#c9c9c9"/><path d="M5 10H24V29H5Z" fill="#fff"/><path d="M5 10H12V22H24V29H5Z" fill="#3d8fd6"/><path d="M12 22L15 19H24V22Z" fill="#8cc4f2"/></svg>
<svg style="position:absolute;left:577.0px;top:80.0px;" width="36" height="36" viewBox="0 0 36 36"><path d="M12 6L16 2H32V19L28 23H12Z" fill="#5aa7e8"/><path d="M28 6L32 2V19L28 23Z" fill="#3d8fd6"/><path d="M1 15L5 11H20V29L16 33H1Z" fill="#5aa7e8"/><path d="M16 15L20 11V29L16 33Z" fill="#3d8fd6"/></svg>
<svg style="position:absolute;left:621.0px;top:80.0px;" width="36" height="36" viewBox="0 0 36 36"><path d="M3 6L7 2H32V15L28 18H3Z" fill="#5aa7e8"/><path d="M3 6L7 2H32L28 6Z" fill="#8cc4f2"/><path d="M28 6L32 2V15L28 18Z" fill="#3d8fd6"/><path d="M1 20L30 20L33 17" stroke="#8cc4f2" stroke-width="1.5" fill="none"/><path d="M3 22H28L32 19V28L28 32H3Z" fill="#e0e0e0" stroke="#666" stroke-width="0.8"/></svg>
<svg style="position:absolute;left:663.0px;top:80.0px;" width="36" height="36" viewBox="0 0 36 36"><path d="M17 2L12 8H15.5V15.5H8V12L2 17L8 22V18.5H15.5V26H12L17 32L22 26H18.5V18.5H26V22L32 17L26 12V15.5H18.5V8H22Z" fill="#333"/></svg>
<svg style="position:absolute;left:716.0px;top:80.0px;" width="36" height="36" viewBox="0 0 36 36"><path d="M3 10H20L24 6V27L20 31H3Z" fill="#e0e0e0" stroke="#555" stroke-width="1"/><path d="M20 10L24 6H7" fill="none" stroke="#555" stroke-width="1"/><path d="M1 5H13V2L18 7L13 12V9H1Z" fill="#1e8ee0"/><g transform="rotate(-40 25 27)"><rect x="17" y="24" width="9" height="6" rx="3" fill="none" stroke="#333" stroke-width="2"/><rect x="23" y="24" width="9" height="6" rx="3" fill="none" stroke="#333" stroke-width="2"/></g></svg>
<svg style="position:absolute;left:760.0px;top:80.0px;" width="36" height="36" viewBox="0 0 36 36"><path d="M1 10L4 7H22V32H1Z" fill="#dedede" stroke="#666" stroke-width="0.8"/><path d="M1 10H12V21H1Z" fill="#5aa7e8"/><path d="M12 21V32M1 21H22" stroke="#666" stroke-width="1"/><path d="M22 7L25 4V29L22 32Z" fill="#c8c8c8"/><circle cx="25" cy="8" r="4.5" fill="#f7a21b"/><path d="M25 1V15M18 8H32M20 3L30 13M30 3L20 13" stroke="#f7a21b" stroke-width="1.4"/></svg>
<svg style="position:absolute;left:803.0px;top:80.0px;" width="36" height="36" viewBox="0 0 36 36"><rect x="1.5" y="20" width="14" height="11" fill="#fff" stroke="#666" stroke-width="1"/><rect x="19" y="4" width="13" height="11" fill="#5aa7e8"/><path d="M16 6V31" stroke="#d83a3a" stroke-width="1"/></svg>
<svg style="position:absolute;left:846.0px;top:80.0px;" width="36" height="36" viewBox="0 0 36 36"><rect x="1" y="2" width="6" height="6" fill="#5aa7e8"/><rect x="1" y="8" width="6" height="6" fill="#fff" stroke="#666" stroke-width="0.8"/><rect x="7" y="8" width="6" height="6" fill="#fff" stroke="#666" stroke-width="0.8"/><path d="M5 14V28M5 18h5M5 23h5M5 28h5" stroke="#777" stroke-width="0.8" stroke-dasharray="1.5 1"/><rect x="15" y="13" width="17" height="20" fill="#fff" stroke="#555" stroke-width="1.2"/><rect x="15" y="13" width="17" height="3" fill="#555"/><path d="M15 21H32M15 26H32M21 16V33" stroke="#555" stroke-width="1"/></svg>
<svg style="position:absolute;left:900.0px;top:80.0px;" width="36" height="36" viewBox="0 0 36 36"><path d="M1 8L7 2H24V27H1Z" fill="#dcdcdc" stroke="#666" stroke-width="1"/><path d="M24 2V27" stroke="#bbb"/><path d="M19 8L24 2V20L19 26Z" fill="#c6c6c6"/><path d="M19 25H33M19 31H33" stroke="#555" stroke-width="1.6"/><path d="M25 22V28M28 28V34" stroke="#3b78b8" stroke-width="2"/></svg>
<svg style="position:absolute;left:944.0px;top:80.0px;" width="36" height="36" viewBox="0 0 36 36"><rect x="1" y="2" width="30" height="27" fill="#fff" stroke="#555" stroke-width="1.4"/><rect x="1" y="2" width="30" height="4" fill="#555"/><path d="M1 13H31M1 20H20M8 6V29M14 6V29M20 6V20" stroke="#555" stroke-width="1"/><path d="M19 25H33M19 31H33" stroke="#555" stroke-width="1.6"/><path d="M25 22V28M28 28V34" stroke="#3b78b8" stroke-width="2"/></svg>
<svg style="position:absolute;left:1020.0px;top:80.0px;" width="36" height="36" viewBox="0 0 36 36"><path d="M2 9L10 2V30L2 33Z" fill="#e6e6e6" stroke="#666" stroke-width="1"/><path d="M10 2L12 1.5V29.5L10 30Z" fill="#9a9a9a"/><path d="M12 1.5L20 2V29L12 32Z" fill="#5cbf78"/><path d="M2 9L10 2L20 2" fill="none" stroke="#777" stroke-width="0.8"/><path d="M24 8L32 2V27L24 32Z" fill="#f0955a"/></svg>
<svg style="position:absolute;left:1111.0px;top:86.0px;" width="32" height="24" viewBox="0 0 32 24"><path d="M1 1V11M28 1V11" stroke="#333" stroke-width="1"/><path d="M2 6H27" stroke="#333" stroke-width="1"/><path d="M2 6L6 3.5V8.5ZM27 6L23 3.5V8.5Z" fill="#333"/><rect x="1" y="13" width="28" height="7" fill="#f2b400"/><path d="M4 13v3M8 13v2M12 13v3M16 13v2M20 13v3M24 13v2" stroke="#a07000" stroke-width="0.8"/></svg>
<svg style="position:absolute;left:1178.0px;top:80.0px;" width="36" height="36" viewBox="0 0 36 36"><rect x="0.5" y="2" width="24" height="7" rx="1" fill="#6aaee8"/><rect x="6" y="9" width="13" height="23" rx="2" fill="#7ab6e8"/><path d="M6 13H19M6 16H19M6 19H19M6 22H19M6 25H19M6 28H19" stroke="#7fb3e0" stroke-width="0.9"/><rect x="15" y="19" width="17" height="14" fill="#f3f3f3"/><path d="M23.5 19V33M16 26H31" stroke="#2ea84a" stroke-width="3.6"/></svg>
<svg style="position:absolute;left:1220.0px;top:80.0px;" width="36" height="36" viewBox="0 0 36 36"><rect x="1" y="2.5" width="29" height="29" fill="#8ac6f4"/><path d="M1 31.5V20C5 14 9 14 12 18C15 13 18 14 22 21C25 19 28 19 30 22V31.5Z" fill="#4a8fd0"/><circle cx="22.5" cy="9.5" r="3.2" fill="#fff"/></svg>
<svg style="position:absolute;left:1280.0px;top:78.5px;" width="40" height="40" viewBox="0 0 40 40"><rect x="0" y="0" width="40" height="39" fill="#1f90d8"/><rect x="4" y="4" width="27" height="22" fill="none" stroke="#a8daf8" stroke-width="1.1" stroke-dasharray="2.5 2"/><path d="M25 17L25 33L29 29.5L32 36L34.5 35L31.5 28.5L36.5 28.5Z" fill="#fff"/></svg>
<div style="position:absolute;left:4.2px;top:144.2px;width:299.5px;height:24.4px;background:#f2f2f2;border:1px solid #cfcfcf;box-sizing:border-box"></div>
<svg style="position:absolute;left:8.0px;top:152.0px;" width="12" height="9" viewBox="0 0 12 9"><path d="M5.5 0.5L0.5 4.5L5.5 8.5ZM11 0.5L6 4.5L11 8.5Z" fill="#333"/></svg>
<span style="position:absolute;left:29.5px;top:150.7px;font-size:10.60px;line-height:normal;color:#555;white-space:nowrap;transform:scaleX(0.940);transform-origin:0 0;">BROWSER</span>
<svg style="position:absolute;left:282.0px;top:151.0px;" width="11" height="11" viewBox="0 0 11 11"><circle cx="5.5" cy="5.5" r="5" fill="#222"/><rect x="2.5" y="4.7" width="6" height="1.6" fill="#fff"/></svg>
<div style="position:absolute;left:40.0px;top:176.0px;width:165.0px;height:17.0px;background:rgba(244,244,244,0.85)"></div>
<svg style="position:absolute;left:20.0px;top:176.0px;" width="14" height="14" viewBox="0 0 14 14"><path d="M12.5 1.5V12.5H1.5Z" fill="#8a8a8a" stroke="#222" stroke-width="1.2" stroke-linejoin="miter"/></svg>
<svg style="position:absolute;left:42.5px;top:178.0px;" width="17" height="12" viewBox="0 0 17 12"><path d="M1 6C4 1.5 13 1.5 16 6C13 10.5 4 10.5 1 6Z" fill="none" stroke="#9a9a9a" stroke-width="1.5"/><circle cx="8.5" cy="6" r="2.4" fill="#9a9a9a"/></svg>
<div style="position:absolute;left:65.0px;top:176.3px;width:121.7px;height:15.7px;background:#8c8c8c"></div>
<svg style="position:absolute;left:67.0px;top:176.0px;" width="17" height="17" viewBox="0 0 17 17"><path d="M2 15.5V4C2 2 3 1 5 1H6.5C8 1 9 2 9 4V15.5Z" fill="#e8e8e8" stroke="#555" stroke-width="1.2"/><path d="M6.5 15.5V10C6.5 8 7.5 7 9.5 7H12C14 7 15 8 15 10V13C15 14.5 14 15.5 12.5 15.5Z" fill="#e8e8e8" stroke="#555" stroke-width="1.2"/></svg>
<span style="position:absolute;left:97.6px;top:177.8px;font-size:11.30px;line-height:normal;color:#ffffff;white-space:nowrap;transform:scaleX(1.116);transform-origin:0 0;">tiny_mold_top</span>
<svg style="position:absolute;left:190.5px;top:177.5px;" width="14" height="14" viewBox="0 0 14 14"><circle cx="7" cy="7" r="5.7" fill="#fff" stroke="#333" stroke-width="1.3"/><circle cx="7" cy="7" r="2.3" fill="#222"/></svg>
<div style="position:absolute;left:58.0px;top:199.2px;width:133.0px;height:18.5px;background:rgba(238,238,238,0.9)"></div>
<svg style="position:absolute;left:39.5px;top:201.2px;" width="10" height="14" viewBox="0 0 10 14"><path d="M1.5 1.5L8.5 7L1.5 12.5Z" fill="none" stroke="#222" stroke-width="1.4" stroke-linejoin="miter"/></svg>
<svg style="position:absolute;left:61.0px;top:200.2px;" width="16" height="16" viewBox="0 0 16 16"><g transform="translate(8 8)" fill="#666"><rect x="-1.8" y="-7.5" width="3.6" height="15" transform="rotate(0)"/><rect x="-1.8" y="-7.5" width="3.6" height="15" transform="rotate(45)"/><rect x="-1.8" y="-7.5" width="3.6" height="15" transform="rotate(90)"/><rect x="-1.8" y="-7.5" width="3.6" height="15" transform="rotate(135)"/><circle r="5"/></g><circle cx="8" cy="8" r="2" fill="#eee"/></svg>
<span style="position:absolute;left:91.0px;top:202.4px;font-size:10.80px;line-height:normal;color:#333;white-space:nowrap;transform:scaleX(0.982);transform-origin:0 0;">Document Settings</span>
<div style="position:absolute;left:58.0px;top:223.2px;width:109.8px;height:18.5px;background:rgba(238,238,238,0.9)"></div>
<svg style="position:absolute;left:39.5px;top:225.2px;" width="10" height="14" viewBox="0 0 10 14"><path d="M1.5 1.5L8.5 7L1.5 12.5Z" fill="none" stroke="#222" stroke-width="1.4" stroke-linejoin="miter"/></svg>
<svg style="position:absolute;left:61.0px;top:225.2px;" width="17" height="14" viewBox="0 0 17 14"><path d="M0.5 1.5H6L7.5 3H16.5V13.5H0.5Z" fill="#888"/><rect x="0.5" y="4" width="16" height="9.5" fill="#8c8c8c"/></svg>
<span style="position:absolute;left:91.5px;top:226.4px;font-size:10.80px;line-height:normal;color:#333;white-space:nowrap;transform:scaleX(1.012);transform-origin:0 0;">Named Views</span>
<div style="position:absolute;left:58.0px;top:247.2px;width:94.6px;height:18.5px;background:rgba(238,238,238,0.9)"></div>
<svg style="position:absolute;left:39.5px;top:249.2px;" width="10" height="14" viewBox="0 0 10 14"><path d="M1.5 1.5L8.5 7L1.5 12.5Z" fill="none" stroke="#222" stroke-width="1.4" stroke-linejoin="miter"/></svg>
<svg style="position:absolute;left:61.0px;top:249.2px;" width="17" height="14" viewBox="0 0 17 14"><path d="M1 7C4 2.5 13 2.5 16 7C13 11.5 4 11.5 1 7Z" fill="none" stroke="#b0b0b0" stroke-width="1.3"/><circle cx="8.5" cy="7" r="2.3" fill="none" stroke="#b0b0b0" stroke-width="1.2"/><path d="M3 12.5L14 1.5" stroke="#b0b0b0" stroke-width="1.3"/></svg>
<svg style="position:absolute;left:86.0px;top:249.2px;" width="17" height="14" viewBox="0 0 17 14"><path d="M0.5 1.5H6L7.5 3H16.5V13.5H0.5Z" fill="#888"/><rect x="0.5" y="4" width="16" height="9.5" fill="#8c8c8c"/></svg>
<span style="position:absolute;left:116.4px;top:250.4px;font-size:10.80px;line-height:normal;color:#333;white-space:nowrap;transform:scaleX(0.944);transform-origin:0 0;">Origin</span>
<div style="position:absolute;left:58.0px;top:271.2px;width:130.0px;height:18.5px;background:rgba(238,238,238,0.9)"></div>
<svg style="position:absolute;left:39.5px;top:273.2px;" width="10" height="14" viewBox="0 0 10 14"><path d="M1.5 1.5L8.5 7L1.5 12.5Z" fill="none" stroke="#222" stroke-width="1.4" stroke-linejoin="miter"/></svg>
<svg style="position:absolute;left:60.5px;top:274.2px;" width="17" height="12" viewBox="0 0 17 12"><path d="M1 6C4 1.5 13 1.5 16 6C13 10.5 4 10.5 1 6Z" fill="none" stroke="#9a9a9a" stroke-width="1.5"/><circle cx="8.5" cy="6" r="2.4" fill="#9a9a9a"/></svg>
<svg style="position:absolute;left:86.0px;top:273.2px;" width="17" height="14" viewBox="0 0 17 14"><path d="M0.5 1.5H6L7.5 3H16.5V13.5H0.5Z" fill="#888"/><rect x="0.5" y="4" width="16" height="9.5" fill="#8c8c8c"/></svg>
<span style="position:absolute;left:116.4px;top:274.4px;font-size:10.80px;line-height:normal;color:#333;white-space:nowrap;transform:scaleX(0.981);transform-origin:0 0;">Relationships</span>
<div style="position:absolute;left:58.0px;top:295.2px;width:113.9px;height:18.5px;background:rgba(238,238,238,0.9)"></div>
<svg style="position:absolute;left:39.5px;top:297.2px;" width="10" height="14" viewBox="0 0 10 14"><path d="M1.5 1.5L8.5 7L1.5 12.5Z" fill="none" stroke="#222" stroke-width="1.4" stroke-linejoin="miter"/></svg>
<svg style="position:absolute;left:60.5px;top:298.2px;" width="17" height="12" viewBox="0 0 17 12"><path d="M1 6C4 1.5 13 1.5 16 6C13 10.5 4 10.5 1 6Z" fill="none" stroke="#9a9a9a" stroke-width="1.5"/><circle cx="8.5" cy="6" r="2.4" fill="#9a9a9a"/></svg>
<svg style="position:absolute;left:86.0px;top:297.2px;" width="17" height="14" viewBox="0 0 17 14"><path d="M0.5 1.5H6L7.5 3H16.5V13.5H0.5Z" fill="#888"/><rect x="0.5" y="4" width="16" height="9.5" fill="#8c8c8c"/></svg>
<span style="position:absolute;left:116.4px;top:298.4px;font-size:10.80px;line-height:normal;color:#333;white-space:nowrap;transform:scaleX(0.988);transform-origin:0 0;">Sketches</span>
<div style="position:absolute;left:58.0px;top:319.2px;width:133.2px;height:18.5px;background:rgba(238,238,238,0.9)"></div>
<svg style="position:absolute;left:39.5px;top:321.2px;" width="10" height="14" viewBox="0 0 10 14"><path d="M1.5 1.5L8.5 7L1.5 12.5Z" fill="none" stroke="#222" stroke-width="1.4" stroke-linejoin="miter"/></svg>
<svg style="position:absolute;left:60.5px;top:322.2px;" width="17" height="12" viewBox="0 0 17 12"><path d="M1 6C4 1.5 13 1.5 16 6C13 10.5 4 10.5 1 6Z" fill="none" stroke="#9a9a9a" stroke-width="1.5"/><circle cx="8.5" cy="6" r="2.4" fill="#9a9a9a"/></svg>
<svg style="position:absolute;left:86.0px;top:319.7px;" width="17" height="17" viewBox="0 0 17 17"><path d="M2 15.5V4C2 2 3 1 5 1H6.5C8 1 9 2 9 4V15.5Z" fill="#fff" stroke="#444" stroke-width="1.2"/><path d="M6.5 15.5V10C6.5 8 7.5 7 9.5 7H12C14 7 15 8 15 10V13C15 14.5 14 15.5 12.5 15.5Z" fill="#fff" stroke="#444" stroke-width="1.2"/></svg>
<span style="position:absolute;left:116.4px;top:322.4px;font-size:10.80px;line-height:normal;color:#333;white-space:nowrap;transform:scaleX(0.954);transform-origin:0 0;">Component2:1</span>
<div style="position:absolute;left:4.5px;top:953.0px;width:299.3px;height:24.5px;background:#f2f2f2;border:1px solid #cfcfcf;box-sizing:border-box"></div>
<span style="position:absolute;left:29.5px;top:959.6px;font-size:10.40px;line-height:normal;color:#555;white-space:nowrap;transform:scaleX(0.923);transform-origin:0 0;">COMMENTS</span>
<svg style="position:absolute;left:282.0px;top:959.5px;" width="11" height="11" viewBox="0 0 11 11"><circle cx="5.5" cy="5.5" r="5" fill="#222"/><path d="M5.5 2.5V8.5M2.5 5.5H8.5" stroke="#fff" stroke-width="1.6"/></svg>
<div style="position:absolute;left:842.0px;top:952.4px;width:235.5px;height:23.3px;background:rgba(238,238,238,0.9)"></div>
<svg style="position:absolute;left:845.0px;top:955.0px;" width="18" height="17" viewBox="0 0 18 17"><path d="M9 1V16" stroke="#444" stroke-width="1.6"/><path d="M6 4L9 1L12 4" fill="none" stroke="#444" stroke-width="1.3"/><ellipse cx="9" cy="10" rx="7.5" ry="3" fill="none" stroke="#444" stroke-width="1.3"/><path d="M1.5 10L3 13L0 13Z" fill="#444"/></svg>
<svg style="position:absolute;left:866.0px;top:961.0px;" width="6" height="6" viewBox="0 0 6 6"><path d="M0 1.8L6 1.8L3 6 Z" fill="#333"/></svg>
<svg style="position:absolute;left:878.0px;top:956.0px;" width="17" height="15" viewBox="0 0 17 15"><rect x="1" y="5" width="15" height="9" fill="none" stroke="#444" stroke-width="1.4"/><rect x="4" y="8" width="9" height="3.5" fill="#9aa4b8" stroke="#444" stroke-width="1"/><path d="M2 4L6 1M6 4L10 1M10 4L14 1" stroke="#444" stroke-width="1.2"/></svg>
<svg style="position:absolute;left:904.0px;top:954.0px;" width="17" height="18" viewBox="0 0 17 18"><path d="M4.5 16.5C3 14 1.5 11.5 1.5 9.5C1.5 8.3 3 8.3 4 9.8V3.5C4 2.3 5.8 2.3 5.8 3.5V8M5.8 8V2.2C5.8 1 7.8 1 7.8 2.2V8M7.8 8V2.8C7.8 1.6 9.8 1.6 9.8 2.8V8M9.8 8V4C9.8 2.8 11.8 2.8 11.8 4V11C11.8 14 11 15.5 10.2 16.5Z" fill="#fff" stroke="#444" stroke-width="1.1" stroke-linejoin="round"/></svg>
<svg style="position:absolute;left:929.0px;top:954.0px;" width="18" height="18" viewBox="0 0 18 18"><circle cx="7" cy="9" r="5" fill="none" stroke="#444" stroke-width="1.5"/><path d="M10.5 12.5L15 17" stroke="#444" stroke-width="2.2"/><path d="M13 2V7M10.5 4.5H15.5" stroke="#444" stroke-width="1"/></svg>
<svg style="position:absolute;left:955.0px;top:954.0px;" width="18" height="18" viewBox="0 0 18 18"><circle cx="7.5" cy="8" r="5.8" fill="none" stroke="#444" stroke-width="1.5"/><rect x="5" y="5.5" width="5" height="5" fill="none" stroke="#444" stroke-width="1.1"/><path d="M11.5 12L16 16.5" stroke="#444" stroke-width="2.2"/></svg>
<svg style="position:absolute;left:977.0px;top:961.0px;" width="6" height="6" viewBox="0 0 6 6"><path d="M0 1.8L6 1.8L3 6 Z" fill="#333"/></svg>
<svg style="position:absolute;left:988.0px;top:955.0px;" width="17" height="17" viewBox="0 0 17 17"><rect x="1" y="1.5" width="15" height="11" fill="#9fb3dd" stroke="#444" stroke-width="1.4"/><path d="M6 15.5H11M8.5 12.5V15.5" stroke="#444" stroke-width="1.4"/></svg>
<svg style="position:absolute;left:1007.0px;top:961.0px;" width="6" height="6" viewBox="0 0 6 6"><path d="M0 1.8L6 1.8L3 6 Z" fill="#333"/></svg>
<svg style="position:absolute;left:1019.0px;top:955.0px;" width="17" height="17" viewBox="0 0 17 17"><rect x="1" y="1" width="15" height="15" fill="none" stroke="#666" stroke-width="1.2"/><path d="M4.75 1V16M8.5 1V16M12.25 1V16M1 4.75H16M1 8.5H16M1 12.25H16" stroke="#666" stroke-width="1"/></svg>
<svg style="position:absolute;left:1038.0px;top:961.0px;" width="6" height="6" viewBox="0 0 6 6"><path d="M0 1.8L6 1.8L3 6 Z" fill="#333"/></svg>
<svg style="position:absolute;left:1050.0px;top:955.0px;" width="17" height="16" viewBox="0 0 17 16"><rect x="1" y="1" width="15" height="14" fill="#9fb3dd" stroke="#445" stroke-width="1.3"/><path d="M8.5 1V15M1 8H16" stroke="#445" stroke-width="1.2"/><rect x="3" y="3" width="3.5" height="3" fill="#cfd8ec"/><rect x="10.5" y="3" width="3.5" height="3" fill="#cfd8ec"/><rect x="3" y="10" width="3.5" height="3" fill="#cfd8ec"/><rect x="10.5" y="10" width="3.5" height="3" fill="#cfd8ec"/></svg>
<svg style="position:absolute;left:1070.0px;top:961.0px;" width="6" height="6" viewBox="0 0 6 6"><path d="M0 1.8L6 1.8L3 6 Z" fill="#333"/></svg>
<div style="position:absolute;left:0.0px;top:982.0px;width:1920.0px;height:50.0px;background:#f1f1f1;border-top:1px solid #dcdcdc;box-sizing:border-box"></div>
<svg style="position:absolute;left:10.0px;top:1000.0px;" width="13" height="13" viewBox="0 0 13 13"><rect x="0.5" y="0.5" width="2" height="12" fill="#555"/><path d="M12.5 0.5L3 6.5L12.5 12.5Z" fill="#555"/></svg>
<svg style="position:absolute;left:35.0px;top:1000.0px;" width="14" height="13" viewBox="0 0 14 13"><path d="M10 0.5L0.5 6.5L10 12.5Z" fill="#555"/><rect x="11" y="4" width="2" height="5" fill="#555"/></svg>
<svg style="position:absolute;left:60.5px;top:1000.0px;" width="13" height="13" viewBox="0 0 13 13"><path d="M0.5 0.5L12 6.5L0.5 12.5Z" fill="#555"/></svg>
<svg style="position:absolute;left:84.0px;top:1000.0px;" width="14" height="13" viewBox="0 0 14 13"><rect x="0.5" y="4" width="2" height="5" fill="#555"/><path d="M3.5 0.5L13 6.5L3.5 12.5Z" fill="#555"/></svg>
<svg style="position:absolute;left:110.0px;top:1000.0px;" width="13" height="13" viewBox="0 0 13 13"><path d="M0.5 0.5L10 6.5L0.5 12.5Z" fill="#555"/><rect x="10.5" y="0.5" width="2" height="12" fill="#555"/></svg>
<svg style="position:absolute;left:144.5px;top:997.0px;" width="17" height="17" viewBox="0 0 17 17"><path d="M1.5 5L5 1.5H13V14.5H1.5Z" fill="#e2e2e2" stroke="#555" stroke-width="1"/><circle cx="13" cy="3" r="3" fill="#f7a21b"/></svg>
<svg style="position:absolute;left:169.0px;top:997.0px;" width="17" height="17" viewBox="0 0 17 17"><path d="M2 15V6L6 1.5H12L15 5V15Z" fill="#d0d0d0" stroke="#444" stroke-width="1.1"/><path d="M4 14L13 6M6 14L14 9" stroke="#888" stroke-width="0.8"/></svg>
<svg style="position:absolute;left:193.0px;top:997.0px;" width="17" height="17" viewBox="0 0 17 17"><rect x="1.5" y="1.5" width="14" height="13" fill="#5aa7e8"/><rect x="1.5" y="8" width="7" height="7" fill="#fff" stroke="#666" stroke-width="0.8"/></svg>
<svg style="position:absolute;left:217.0px;top:997.0px;" width="17" height="17" viewBox="0 0 17 17"><rect x="1.5" y="1.5" width="13" height="13" fill="none" stroke="#666" stroke-width="0.8" stroke-dasharray="2 1"/><path d="M5 12L13 5" stroke="#f0a020" stroke-width="2.4"/></svg>
<svg style="position:absolute;left:241.0px;top:997.0px;" width="17" height="17" viewBox="0 0 17 17"><path d="M2 4L5 1.5H15V13L12 15.5H2Z" fill="#5aa7e8"/><path d="M12 4L15 1.5V13L12 15.5Z" fill="#3d8fd6"/></svg>
<svg style="position:absolute;left:265.2px;top:997.0px;" width="17" height="17" viewBox="0 0 17 17"><path d="M6 3L8 1H15V9L13 11H6Z" fill="#5aa7e8"/><path d="M1 7L3 5H10V13L8 15H1Z" fill="#5aa7e8"/></svg>
<svg style="position:absolute;left:289.0px;top:997.0px;" width="17" height="17" viewBox="0 0 17 17"><path d="M8.5 0.5L5.5 4H7.5V7.5H4V5.5L0.5 8.5L4 11.5V9.5H7.5V13H5.5L8.5 16.5L11.5 13H9.5V9.5H13V11.5L16.5 8.5L13 5.5V7.5H9.5V4H11.5Z" fill="#222"/></svg>
<svg style="position:absolute;left:313.2px;top:997.0px;" width="17" height="17" viewBox="0 0 17 17"><rect x="1" y="1" width="7" height="6" rx="2" fill="#eee" stroke="#666" stroke-width="0.8"/><path d="M8 9L11 7H16V14L13 16H8Z" fill="#5aa7e8"/><path d="M3 9V13H6" fill="none" stroke="#333" stroke-width="0.9"/></svg>
<svg style="position:absolute;left:337.0px;top:997.0px;" width="17" height="17" viewBox="0 0 17 17"><rect x="1.5" y="9" width="6" height="6" fill="#fff" stroke="#666" stroke-width="0.8"/><rect x="9" y="1.5" width="6" height="6" fill="#5aa7e8"/><path d="M8 3V15" stroke="#d83a3a" stroke-width="0.8"/></svg>
<svg style="position:absolute;left:361.0px;top:997.0px;" width="17" height="17" viewBox="0 0 17 17"><rect x="1.5" y="1.5" width="5" height="14" fill="#fff" stroke="#888" stroke-width="0.8"/><path d="M6.5 1.5H15V7H6.5Z" fill="#5aa7e8"/></svg>
<svg style="position:absolute;left:385.2px;top:997.0px;" width="17" height="17" viewBox="0 0 17 17"><rect x="3" y="4" width="10" height="10" fill="#e4e4e4" stroke="#888" stroke-width="0.8"/><path d="M1 9H6" stroke="#d83a3a" stroke-width="1"/><rect x="1.5" y="1.5" width="5" height="5" fill="#fff" stroke="#888" stroke-width="0.7"/></svg>
<div style="position:absolute;left:155.0px;top:1021.5px;width:240.0px;height:1.2px;background:#c4c4c4"></div>
<div style="position:absolute;left:154.5px;top:1017.5px;width:1.0px;height:4.5px;background:#c4c4c4"></div>
<div style="position:absolute;left:179.0px;top:1017.5px;width:1.0px;height:4.5px;background:#c4c4c4"></div>
<div style="position:absolute;left:203.0px;top:1017.5px;width:1.0px;height:4.5px;background:#c4c4c4"></div>
<div style="position:absolute;left:227.0px;top:1017.5px;width:1.0px;height:4.5px;background:#c4c4c4"></div>
<div style="position:absolute;left:251.0px;top:1017.5px;width:1.0px;height:4.5px;background:#c4c4c4"></div>
<div style="position:absolute;left:275.2px;top:1017.5px;width:1.0px;height:4.5px;background:#c4c4c4"></div>
<div style="position:absolute;left:299.0px;top:1017.5px;width:1.0px;height:4.5px;background:#c4c4c4"></div>
<div style="position:absolute;left:323.2px;top:1017.5px;width:1.0px;height:4.5px;background:#c4c4c4"></div>
<div style="position:absolute;left:347.0px;top:1017.5px;width:1.0px;height:4.5px;background:#c4c4c4"></div>
<div style="position:absolute;left:371.0px;top:1017.5px;width:1.0px;height:4.5px;background:#c4c4c4"></div>
<div style="position:absolute;left:395.2px;top:1017.5px;width:1.0px;height:4.5px;background:#c4c4c4"></div>
<svg style="position:absolute;left:399.0px;top:991.0px;" width="14" height="34" viewBox="0 0 14 34"><path d="M0.5 1H13.5L8 8V33H6V8Z" fill="#555"/></svg>
<svg style="position:absolute;left:1890.0px;top:998.0px;" width="17" height="17" viewBox="0 0 17 17"><g transform="translate(8.5 8.5)" fill="#777"><rect x="-1.6" y="-7.5" width="3.2" height="15" transform="rotate(0)"/><rect x="-1.6" y="-7.5" width="3.2" height="15" transform="rotate(45)"/><rect x="-1.6" y="-7.5" width="3.2" height="15" transform="rotate(90)"/><rect x="-1.6" y="-7.5" width="3.2" height="15" transform="rotate(135)"/><circle r="5.2"/></g><circle cx="8.5" cy="8.5" r="2.3" fill="#f1f1f1"/></svg>
<svg style="position:absolute;left:1864.0px;top:957.0px;" width="18" height="17" viewBox="0 0 18 17"><path d="M9 1L17 15.5H1Z" fill="#f7d21e" stroke="#333" stroke-width="1.2" stroke-linejoin="round"/><path d="M9 6V10.5" stroke="#222" stroke-width="1.8"/><circle cx="9" cy="13" r="1" fill="#222"/></svg>
<svg style="position:absolute;left:1891.0px;top:957.0px;" width="17" height="17" viewBox="0 0 17 17"><path d="M16 8.5A7.5 7.5 0 1 0 8.5 16L16 16Z" fill="#111"/><path d="M3.5 10.5L10 5.5M5 12L11.5 7M7 13L13 8.5" stroke="#bbb" stroke-width="0.8"/></svg>
<svg style="position:absolute;left:1820.0px;top:140.0px;overflow:visible" width="80" height="125" viewBox="0 0 80 125"><defs><linearGradient id="vct" x1="0" y1="0" x2="0" y2="1"><stop offset="0" stop-color="#f4f4f4"/><stop offset="1" stop-color="#e6e6e6"/></linearGradient></defs><path d="M36.7 27.8L71.3 43.4L36.7 62.4L2 42.7Z" fill="#ececec" stroke="#555" stroke-width="0.8"/><path d="M2 42.7L36.7 62.4V101.8L4.8 81.4Z" fill="#e9e9e9" stroke="#555" stroke-width="0.8"/><path d="M36.7 62.4L71.3 43.4L68.5 80L36.7 101.8Z" fill="#e2e2e2" stroke="#555" stroke-width="0.8"/><text x="36" y="47" font-size="8" fill="#8a8a8a" transform="rotate(28 36 45)" text-anchor="middle" font-family="Liberation Sans">TOP</text><text x="19" y="77" font-size="8" fill="#8a8a8a" transform="rotate(35 19 75)" text-anchor="middle" font-family="Liberation Sans">FRONT</text><text x="53" y="78" font-size="8" fill="#8a8a8a" transform="rotate(-33 53 76)" text-anchor="middle" font-family="Liberation Sans">RIGHT</text><path d="M4.8 81.4L0 36.6" stroke="#4444cc" stroke-width="1.6"/><path d="M4.8 81.4L36.7 101.8" stroke="#e06060" stroke-width="1.6"/><text x="-1.5" y="33" font-size="11" fill="#7070e0" font-family="Liberation Sans">Z</text><text x="43" y="118" font-size="11" fill="#f07070" font-family="Liberation Sans">X</text></svg>
</body></html>
